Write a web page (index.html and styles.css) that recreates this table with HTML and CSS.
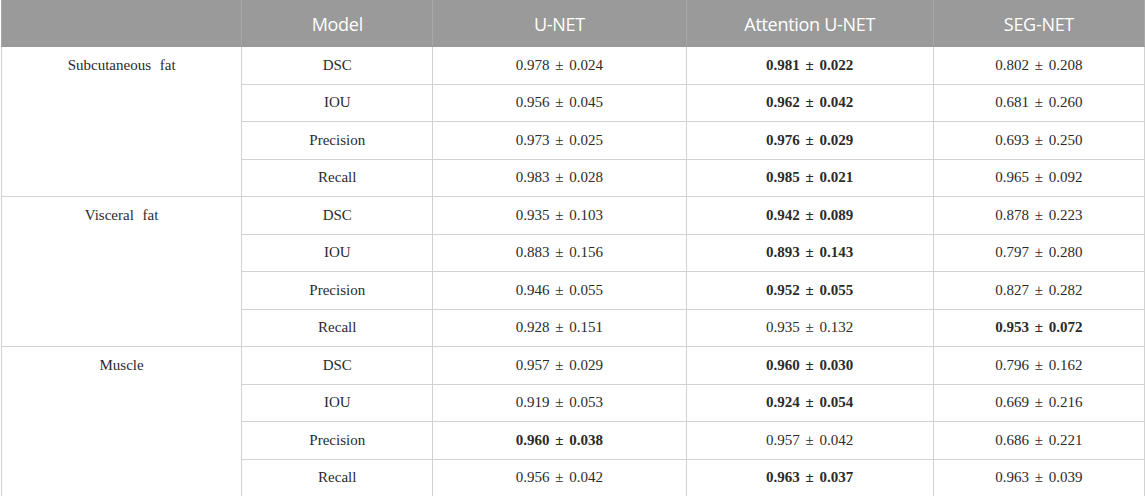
FILE: index.html
```html
<!DOCTYPE html>
<html>
<head>
<meta charset="utf-8">
<link rel="stylesheet" href="styles.css">
</head>
<body>
<table class="results">
<colgroup>
<col class="c1"><col class="c2"><col class="c3"><col class="c4"><col class="c5">
</colgroup>
<thead>
<tr class="head"><th></th><th>Model</th><th>U-NET</th><th>Attention U-NET</th><th>SEG-NET</th></tr>
</thead>
<tbody>
<tr><td class="group" rowspan="4">Subcutaneous fat</td><td>DSC</td><td>0.978 ± 0.024</td><td class="b">0.981 ± 0.022</td><td>0.802 ± 0.208</td></tr>
<tr><td>IOU</td><td>0.956 ± 0.045</td><td class="b">0.962 ± 0.042</td><td>0.681 ± 0.260</td></tr>
<tr><td>Precision</td><td>0.973 ± 0.025</td><td class="b">0.976 ± 0.029</td><td>0.693 ± 0.250</td></tr>
<tr><td>Recall</td><td>0.983 ± 0.028</td><td class="b">0.985 ± 0.021</td><td>0.965 ± 0.092</td></tr>
<tr><td class="group" rowspan="4">Visceral fat</td><td>DSC</td><td>0.935 ± 0.103</td><td class="b">0.942 ± 0.089</td><td>0.878 ± 0.223</td></tr>
<tr><td>IOU</td><td>0.883 ± 0.156</td><td class="b">0.893 ± 0.143</td><td>0.797 ± 0.280</td></tr>
<tr><td>Precision</td><td>0.946 ± 0.055</td><td class="b">0.952 ± 0.055</td><td>0.827 ± 0.282</td></tr>
<tr><td>Recall</td><td>0.928 ± 0.151</td><td>0.935 ± 0.132</td><td class="b">0.953 ± 0.072</td></tr>
<tr><td class="group" rowspan="4">Muscle</td><td>DSC</td><td>0.957 ± 0.029</td><td class="b">0.960 ± 0.030</td><td>0.796 ± 0.162</td></tr>
<tr><td>IOU</td><td>0.919 ± 0.053</td><td class="b">0.924 ± 0.054</td><td>0.669 ± 0.216</td></tr>
<tr><td>Precision</td><td class="b">0.960 ± 0.038</td><td>0.957 ± 0.042</td><td>0.686 ± 0.221</td></tr>
<tr><td>Recall</td><td>0.956 ± 0.042</td><td class="b">0.963 ± 0.037</td><td>0.963 ± 0.039</td></tr>
</tbody>
</table>
</body>
</html>
```
FILE: styles.css
```css
html, body {
  margin: 0;
  padding: 0;
  background: #fff;
}
.results {
  border-collapse: collapse;
  table-layout: fixed;
  width: 1144px;
  margin-left: 1px;
  font-family: "Liberation Serif", "Times New Roman", serif;
  font-size: 15px;
  color: #2b2b2b;
}
.c1 { width: 240px; }
.c2 { width: 191px; }
.c3 { width: 253px; }
.c4 { width: 247px; }
.c5 { width: 211px; }
.results th {
  background: #9a9a9a;
  color: #fff;
  font-family: "Open Sans", "Liberation Sans", sans-serif;
  font-weight: 400;
  font-size: 18px;
  letter-spacing: -0.3px;
  height: 45px;
  padding: 0;
  text-align: center;
  vertical-align: middle;
  border: 1px solid #9a9a9a;
  border-right-color: #a8a8a8;
  border-left-color: #a8a8a8;
}
.results td {
  height: 36.5px;
  padding: 0;
  text-align: center;
  vertical-align: middle;
  border: 1px solid #d2d2d2;
  word-spacing: 2px;
}
.results td.group {
  vertical-align: top;
  padding-top: 10px;
  word-spacing: 5px;
}
.results td.b {
  font-weight: 700;
}
```
